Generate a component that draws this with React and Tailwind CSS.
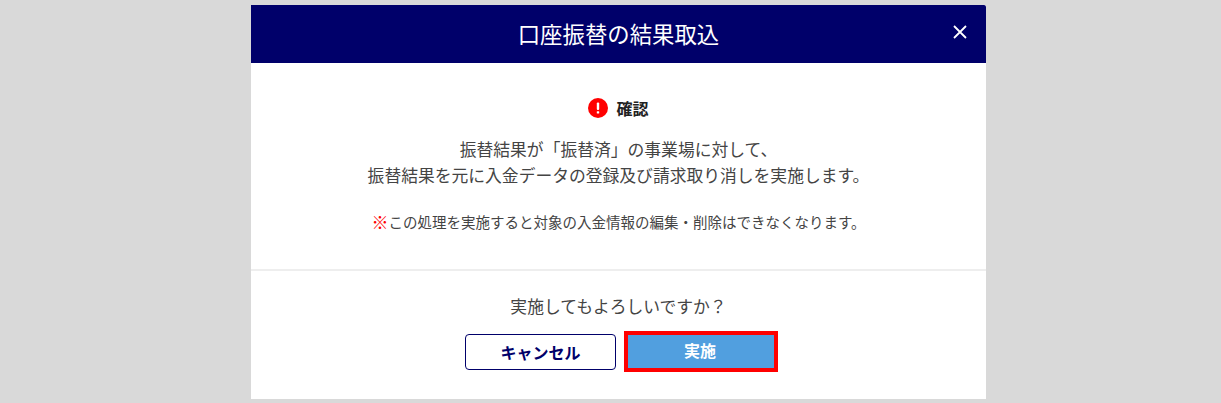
import React from 'react';

const fontStack = "font-['Noto_Sans_CJK_JP','Noto_Sans',sans-serif]";

const App = () => {
  return (
    <div className={`h-[403px] w-[1221px] overflow-hidden bg-[#d9d9d9] pt-[5px] ${fontStack}`}>
      <div className="ml-[251px] flex h-[394px] w-[735px] flex-col bg-white">
        <div className="relative flex h-[58px] items-center justify-center rounded-tr-[2px] bg-[#00006a] text-[22.4px] text-white">
          口座振替の結果取込
          <button className="absolute right-[18px] top-[19px] text-white">
            <svg width="16" height="16" viewBox="0 0 16 16" fill="none" stroke="currentColor" strokeWidth="1.8">
              <path d="M2 2 L14 14 M14 2 L2 14" />
            </svg>
          </button>
        </div>

        <div className="flex h-[208px] flex-col items-center border-b-2 border-[#eeeeee] pt-[34px]">
          <div className="flex h-[22px] items-center gap-[8px] text-[16px] font-bold leading-none text-[#222222]">
            <svg width="20" height="20" viewBox="0 0 20 20">
              <circle cx="10" cy="10" r="10" fill="#ff0000" />
              <rect x="8.8" y="4.5" width="2.4" height="7.5" rx="1" fill="#ffffff" />
              <rect x="8.8" y="13.2" width="2.4" height="2.4" rx="0.6" fill="#ffffff" />
            </svg>
            確認
          </div>
          <p className="mt-[17px] text-center text-[16.8px] leading-[26px] text-[#444444]">
            振替結果が「振替済」の事業場に対して、
            <br />
            振替結果を元に入金データの登録及び請求取り消しを実施します。
          </p>
          <p className="mt-[23px] flex items-center text-[14.5px] leading-[22px] text-[#444444]">
            <span className="text-[17px] font-bold text-[#ff0000]">※</span>
            この処理を実施すると対象の入金情報の編集・削除はできなくなります。
          </p>
        </div>

        <div className="flex flex-1 flex-col items-center pt-[22px]">
          <p className="text-[16.8px] leading-[26px] text-[#444444]">実施してもよろしいですか？</p>
          <div className="ml-[6px] mt-[12px] flex items-center gap-[8px]">
            <button className="h-[36px] w-[151px] rounded-[4px] border border-[#00006a] bg-white text-[16px] font-bold text-[#00006a]">
              キャンセル
            </button>
            <button className="h-[41px] w-[154px] border-4 border-[#ff0000] bg-[#519fdf] pb-[3px] pr-[2px] text-[16px] font-bold text-white">
              実施
            </button>
          </div>
        </div>
      </div>
    </div>
  );
};

export default App;
